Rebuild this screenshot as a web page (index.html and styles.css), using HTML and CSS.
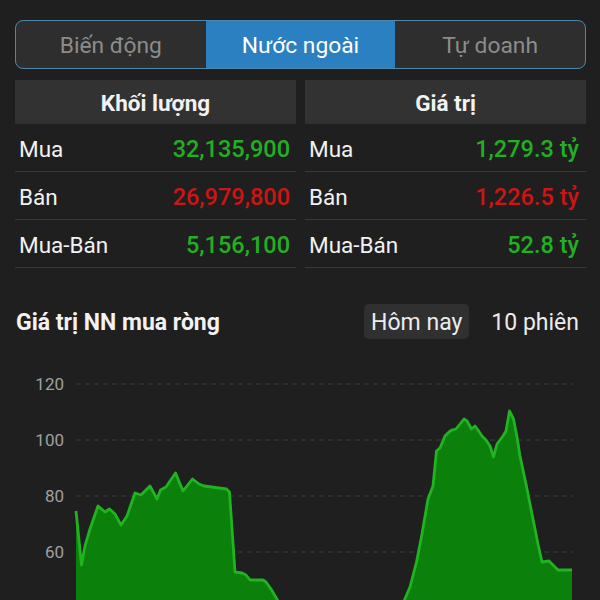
FILE: index.html
```html
<!DOCTYPE html>
<html>
<head>
    <title>Nước ngoài</title>
    <link rel="stylesheet" href="styles.css">
</head>
<body>
    <div class="page">
        <div class="tabs">
            <div class="tab">Biến động</div>
            <div class="tab active">Nước ngoài</div>
            <div class="tab">Tự doanh</div>
        </div>

        <div class="stats">
            <div class="col">
                <div class="col-head">Khối lượng</div>
                <div class="row"><span>Mua</span><span class="val up">32,135,900</span></div>
                <div class="row"><span>Bán</span><span class="val down">26,979,800</span></div>
                <div class="row"><span>Mua-Bán</span><span class="val up">5,156,100</span></div>
            </div>
            <div class="col">
                <div class="col-head">Giá trị</div>
                <div class="row"><span>Mua</span><span class="val up">1,279.3 tỷ</span></div>
                <div class="row"><span>Bán</span><span class="val down">1,226.5 tỷ</span></div>
                <div class="row"><span>Mua-Bán</span><span class="val up">52.8 tỷ</span></div>
            </div>
        </div>

        <div class="chart-head">
            <h3>Giá trị NN mua ròng</h3>
            <div class="range">
                <span class="pill selected">Hôm nay</span>
                <span class="pill">10 phiên</span>
            </div>
        </div>

        <!-- viewBox uses screen coordinates so the points read straight off the chart -->
        <svg class="chart" viewBox="0 350 600 260" width="600" height="260">
            <g class="grid">
                <line x1="76" y1="385" x2="573" y2="385"/>
                <line x1="76" y1="441" x2="573" y2="441"/>
                <line x1="76" y1="497" x2="573" y2="497"/>
                <line x1="76" y1="553" x2="573" y2="553"/>
            </g>
            <g class="axis">
                <text x="64" y="391">120</text>
                <text x="64" y="447">100</text>
                <text x="64" y="503">80</text>
                <text x="64" y="559">60</text>
            </g>
            <path class="area" d="M76,512 L81.5,566 L85,547 L90,530 L98,507 L105,513 L109.5,510 L115,515 L121,526 L127,517 L135,494 L141,496 L150,487 L157,500 L160.5,491 L166,488 L175.5,474 L183,492 L192.5,480 L199,485 L204,487 L226.5,490 L229.5,493 L235,573 L242,574 L246,576 L250,581 L263,581 L266,583 L271,590 L278,602 L280,620 L76,620 Z"/>
            <path class="line" d="M76,512 L81.5,566 L85,547 L90,530 L98,507 L105,513 L109.5,510 L115,515 L121,526 L127,517 L135,494 L141,496 L150,487 L157,500 L160.5,491 L166,488 L175.5,474 L183,492 L192.5,480 L199,485 L204,487 L226.5,490 L229.5,493 L235,573 L242,574 L246,576 L250,581 L263,581 L266,583 L271,590 L278,602 L280,620"/>
            <path class="area" d="M400,620 L404,602 L410,588 L416.5,563 L422,535 L428,500 L433,487 L436.5,452 L440,449 L445,437 L449,433 L452,431 L456,430 L460,425 L464,420 L467,422 L471.5,430 L475,427 L478,431 L482,437 L486,441 L490,447 L493.5,458 L497,445 L503,437 L506,432 L509.5,412 L513.5,420 L517,438 L520,457 L526,485 L533,520 L538,545 L542,563 L549,562 L553,566 L558,571 L572,571 L572,620 Z"/>
            <path class="line" d="M400,620 L404,602 L410,588 L416.5,563 L422,535 L428,500 L433,487 L436.5,452 L440,449 L445,437 L449,433 L452,431 L456,430 L460,425 L464,420 L467,422 L471.5,430 L475,427 L478,431 L482,437 L486,441 L490,447 L493.5,458 L497,445 L503,437 L506,432 L509.5,412 L513.5,420 L517,438 L520,457 L526,485 L533,520 L538,545 L542,563 L549,562 L553,566 L558,571 L572,571"/>
        </svg>
    </div>
</body>
</html>
```

FILE: styles.css
```css
body {
    margin: 0;
    background-color: #1f1f1f;
    color: #f2f2f2;
    font-family: Roboto, "Noto Sans", sans-serif;
    overflow: hidden;
}
.page {
    padding: 20px 14px 0 15px;
}
.tabs {
    display: flex;
    height: 49px;
    box-sizing: border-box;
    border: 1.5px solid #4f86aa;
    border-radius: 8px;
    overflow: hidden;
    background-color: #2e2e2e;
}
.tab {
    flex: 1;
    display: flex;
    align-items: center;
    justify-content: center;
    padding-top: 2px;
    font-size: 22.8px;
    color: #8c8c8c;
}
.tab.active {
    background-color: #2b80c2; /* selected segment */
    color: #ffffff;
}
.stats {
    display: grid;
    grid-template-columns: 1fr 1fr;
    column-gap: 9px;
    margin-top: 11px;
}
.col-head {
    height: 44px;
    display: flex;
    align-items: center;
    justify-content: center;
    padding-top: 2px;
    box-sizing: border-box;
    background-color: #323232;
    font-size: 22.5px;
    font-weight: bold;
}
.row {
    height: 44px;
    display: flex;
    align-items: center;
    justify-content: space-between;
    padding: 3px 6px 0 4px;
    border-bottom: 1px solid #3a3a3a;
    font-size: 22.5px;
}
.col + .col .row {
    padding-right: 7px;
}
.val {
    font-weight: 500;
    font-size: 23.5px;
}
.up {
    color: #22b022;
}
.down {
    color: #cc1515;
}
.chart-head {
    display: flex;
    align-items: center;
    justify-content: space-between;
    margin-top: 36px;
    height: 35px;
}
.chart-head h3 {
    margin: 0;
    font-size: 23px;
    font-weight: bold;
    padding: 2px 0 0 1px;
}
.range {
    display: flex;
    gap: 15px;
}
.pill {
    height: 35px;
    display: flex;
    align-items: center;
    padding: 1px 7px 0;
    box-sizing: border-box;
    border-radius: 5px;
    font-size: 23px;
    color: #ececec;
}
.pill.selected {
    background-color: #303030;
}
.chart {
    display: block;
    margin: 10px 0 0 -15px;
}
.grid line {
    stroke: #3e3e3e;
    stroke-width: 1;
    stroke-dasharray: 5 4;
}
.axis text {
    fill: #a0a0a0;
    font-size: 17px;
    text-anchor: end;
}
.area {
    fill: #0b800b;
}
.line {
    fill: none;
    stroke: #20b420;
    stroke-width: 2.8;
    stroke-linejoin: round;
}
```
